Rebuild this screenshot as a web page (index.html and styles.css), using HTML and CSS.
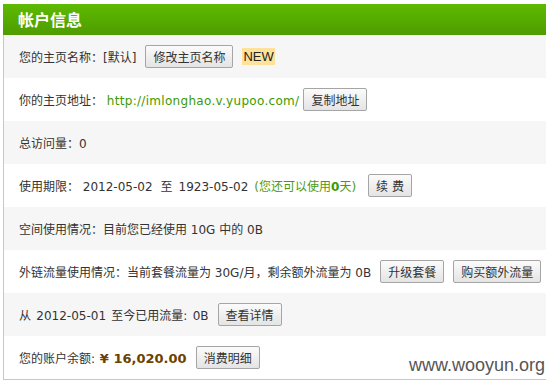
FILE: index.html
```
<!DOCTYPE html>
<html lang="zh-CN">
<head>
    <meta charset="UTF-8">
    <title>帐户信息</title>
    <link rel="stylesheet" href="styles.css">
</head>
<body>
    <div class="panel">
        <div class="panel-head">帐户信息</div>

        <div class="row alt">
            <span>您的主页名称：[默认]</span>
            <button class="btn">修改主页名称</button>
            <span class="badge">NEW</span>
        </div>

        <div class="row tight">
            <span>你的主页地址： <a class="link" href="#">http://imlonghao.v.yupoo.com/</a></span>
            <button class="btn">复制地址</button>
        </div>

        <div class="row alt">
            <span>总访问量：0</span>
        </div>

        <div class="row">
            <span>使用期限： 2012-05-02<span class="sep">至</span>1923-05-02<span class="note">(您还可以使用<b>0</b>天)</span></span>
            <button class="btn">续 费</button>
        </div>

        <div class="row alt">
            <span>空间使用情况：目前您已经使用 10G 中的 0B</span>
        </div>

        <div class="row">
            <span>外链流量使用情况：当前套餐流量为 30G/月，剩余额外流量为 0B</span>
            <button class="btn">升级套餐</button>
            <button class="btn">购买额外流量</button>
        </div>

        <div class="row alt">
            <span class="wide">从 2012-05-01 至今已用流量: 0B</span>
            <button class="btn">查看详情</button>
        </div>

        <div class="row">
            <span>您的账户余额: <strong class="money">¥ 16,020.00</strong></span>
            <button class="btn">消费明细</button>
        </div>
    </div>

    <div class="watermark">www.wooyun.org</div>
</body>
</html>
```

FILE: styles.css
```
* {
    margin: 0;
    padding: 0;
    box-sizing: border-box;
}

body {
    font-family: 'DejaVu Sans', 'Noto Sans CJK SC', sans-serif;
    font-size: 12px;
    color: #333;
    background: #fff;
    padding: 4px 0 0 3px;
    width: 546px;
    height: 380px;
    overflow: hidden;
    position: relative;
}

.panel {
    border-left: 1px solid #c8c8c8;
    border-bottom: 1px solid #c8c8c8;
}

.panel-head {
    height: 31px;
    line-height: 31px;
    padding-left: 15px;
    margin-left: -1px;
    font-family: 'Noto Sans CJK SC', sans-serif;
    font-size: 16px;
    font-weight: bold;
    color: #fff;
    background: linear-gradient(#5dba00, #4f9c00);
}

.row {
    height: 43px;
    display: flex;
    align-items: center;
    gap: 9px;
    padding-left: 15px;
    white-space: nowrap;
}

.row.alt {
    background: #f6f6f6;
}

.row.tight {
    gap: 4px;
}

.wide {
    word-spacing: 1.5px;
}

.sep {
    margin: 0 6px 0 8px;
}

.link {
    color: #3d9a00;
    text-decoration: none;
    letter-spacing: 0.3px;
}

.note {
    color: #4f9a10;
    margin-left: 6px;
    margin-right: 3px;
}

.note b {
    color: #3d9a00;
}

.money {
    color: #6b4200;
    font-size: 13px;
    margin-left: 1px;
}

.btn {
    flex-shrink: 0;
    font-family: 'DejaVu Sans', 'Noto Sans CJK SC', sans-serif;
    font-size: 12px;
    color: #333;
    height: 23px;
    padding: 0 7px;
    border: 1px solid #a5a5a5;
    border-radius: 2px;
    background: linear-gradient(#fbfbfb, #e4e4e4);
}

.badge {
    font-family: 'Liberation Sans', sans-serif;
    font-size: 13px;
    color: #222;
    background: #ffe29a;
    padding: 1px 1px;
}

.watermark {
    position: absolute;
    right: 1px;
    bottom: 4px;
    font-family: 'Liberation Sans', sans-serif;
    font-size: 18px;
    color: #555;
}
```
